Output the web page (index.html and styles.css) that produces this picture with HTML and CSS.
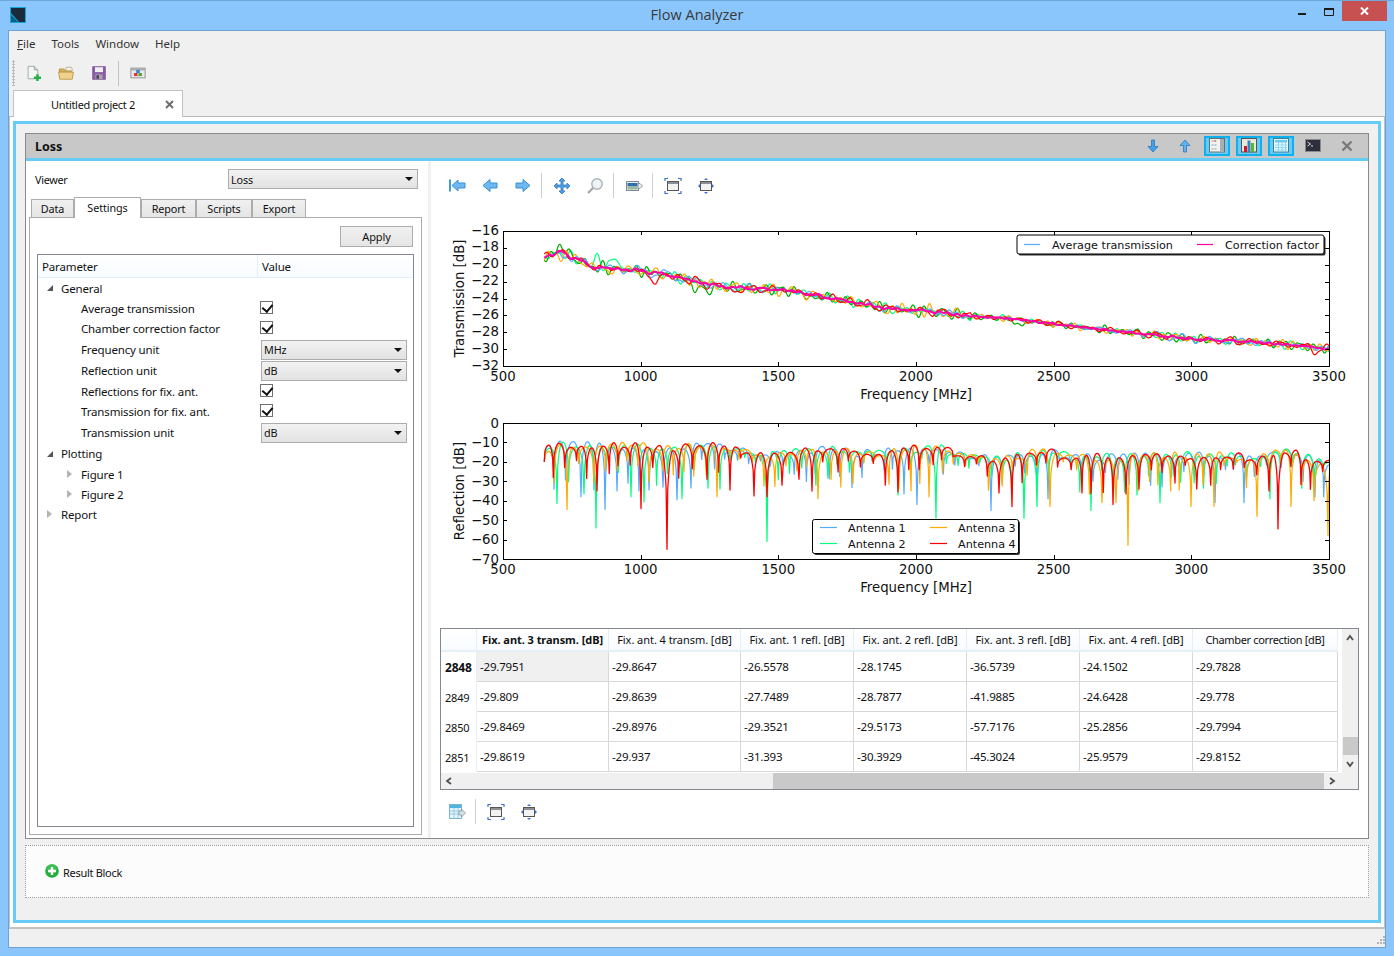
FILE: index.html
```html
<!DOCTYPE html>
<html lang="en">
<head>
<meta charset="utf-8">
<title>Flow Analyzer</title>
<link rel="stylesheet" href="styles.css">
</head>
<body>
<div class="window">
  <header class="titlebar">
    <svg class="appicon" viewBox="0 0 16 16"><rect width="16" height="16" fill="#14a5d8"/><path d="M1 1h14v14H9L1 6z" fill="#1b2a38"/><path d="M1 8l7 7H1z" fill="#0b5f86"/></svg>
    <div class="apptitle">Flow Analyzer</div>
    <div class="wincontrols">
      <svg class="wc-min" viewBox="0 0 8 2"><rect width="8" height="2" fill="#1a1a1a"/></svg>
      <svg class="wc-max" viewBox="0 0 10 8"><path d="M.5.5h9v7h-9z" fill="none" stroke="#1a1a1a"/><path d="M0 0h10v2H0z" fill="#1a1a1a"/></svg>
      <div class="wc-close"><svg viewBox="0 0 9 8"><path d="M1 .5l7 7M8 .5l-7 7" stroke="#fff" stroke-width="2"/></svg></div>
    </div>
  </header>
  <div class="client">
    <nav class="menubar">
      <span class="menu"><u>F</u>ile</span><span class="menu">Tools</span><span class="menu">Window</span><span class="menu">Help</span>
    </nav>
    <div class="toolbar">
      <div class="grip"></div>
      <button class="tb"><svg viewBox="0 0 18 18"><path d="M3.500 1.500h7l4 4v10h-11z" fill="#f4f6f3" stroke="#98a2a0"/><path d="M10.500 1.500v4h4" fill="#cfd8d6" stroke="#98a2a0"/><path d="M10 13h2.600v-2.600h2.800V13H18v2.800h-2.600v2.200h-2.800v-2.200H10z" fill="#27b04a"/></svg></button>
      <button class="tb"><svg viewBox="0 0 18 18"><path d="M1.500 4.500h5l1.500 1.500h7v2h-13.500z" fill="#d9b25e" stroke="#b28f3e"/><path d="M9 2.500h6l1 2v2H9z" fill="#f3f1e4" stroke="#b9b08c"/><path d="M.7 8h16.600l-1.300 8H2z" fill="#f1d28c" stroke="#bb9544"/></svg></button>
      <button class="tb"><svg viewBox="0 0 18 18"><rect x="2" y="2" width="14" height="14" fill="#8d5ca8" stroke="#7a4c97"/><rect x="4.500" y="2.500" width="9" height="5.500" fill="#efeef2"/><rect x="5" y="10.500" width="8" height="5.500" fill="#a7a3ad"/><rect x="6" y="11.500" width="3" height="4" fill="#4e4a55"/></svg></button>
      <i class="tbsep"></i>
      <button class="tb"><svg viewBox="0 0 18 18"><rect x="1" y="3.500" width="16" height="11" fill="#e8e8e8" stroke="#8c8c8c"/><rect x="1.500" y="4" width="15" height="2" fill="#a9a9a9"/><rect x="7" y="5.500" width="4" height="3.500" fill="#3585d0"/><rect x="4.500" y="9" width="4" height="3.500" fill="#d93a3a"/><rect x="9.500" y="9" width="4" height="3.500" fill="#55a83a"/></svg></button>
    </div>
    <div class="doctabs">
      <div class="doctab"><span class="doctab-label">Untitled project 2</span>
        <svg class="doctab-x" viewBox="0 0 9 9"><path d="M1 1l7 7M8 1L1 8" stroke="#6e6e6e" stroke-width="2"/></svg></div>
    </div>
    <main class="docpage">
      <div class="cyanframe">
        <section class="panel">
          <div class="panelhead">
            <span class="paneltitle">Loss</span>
            <div class="panelicons">
              <button class="pi"><svg viewBox="0 0 16 16"><path d="M6.500 2h3v6.500H13L8 14 3 8.500h3.500z" fill="#3fa2ea" stroke="#2a78bb" stroke-width=".8"/></svg></button>
              <button class="pi"><svg viewBox="0 0 16 16"><path d="M8 2l5 5.500H9.500V14h-3V7.500H3z" fill="#5fb4ef" stroke="#2a78bb" stroke-width=".8"/></svg></button>
              <button class="pi on"><svg viewBox="0 0 16 16"><rect x=".5" y=".5" width="15" height="13.500" fill="#f3f3ef" stroke="#6b6f73"/><rect x="11" y="1" width="4" height="12.500" fill="#a9aeb2"/><path d="M2.500 3h6" stroke="#999" stroke-dasharray="2 1"/><path d="M2.500 7h6" stroke="#6a9de0" stroke-dasharray="2 1"/><path d="M2.500 11h6" stroke="#999" stroke-dasharray="2 1"/><path d="M5 3h2" stroke="#d05a5a"/></svg></button>
              <button class="pi on"><svg viewBox="0 0 16 16"><rect x=".5" y=".5" width="15" height="13.500" fill="#ece9d8" stroke="#555"/><rect x="3" y="8" width="3" height="6" fill="#d8132c"/><rect x="6.500" y="2.500" width="3" height="11.500" fill="#2e87c7"/><rect x="10" y="5" width="3" height="9" fill="#5cb532"/></svg></button>
              <button class="pi on"><svg viewBox="0 0 16 16"><rect x=".5" y=".5" width="15" height="13.500" fill="#eefaff" stroke="#3d7f9b"/><rect x="2" y="2" width="12" height="2.500" fill="#62cdf0"/><path d="M2 7h12M2 9.500h12M2 12h12M5.500 4v9M9 4v9M12.500 4v9" stroke="#87d8f2"/></svg></button>
              <button class="pi"><svg viewBox="0 0 16 16"><rect x=".5" y="1.500" width="15" height="12" fill="#2d2f3d" stroke="#8a8a8a"/><path d="M2.500 4l3 2-3 2M6 8h2" stroke="#ddd" fill="none"/></svg></button>
              <button class="pi"><svg viewBox="0 0 16 16"><path d="M3.500 3.500l9 9M12.500 3.500l-9 9" stroke="#7a7a7a" stroke-width="2.400"/></svg></button>
            </div>
          </div>
          <div class="panelbody">
            <aside class="leftpane">
              <div class="viewerrow">
                <label class="viewerlabel">Viewer</label>
                <div class="combo viewercombo"><span>Loss</span><i class="arrow"></i></div>
              </div>
              <div class="settabs">
                <span class="settab st-data">Data</span><span class="settab active st-set">Settings</span><span class="settab st-rep">Report</span><span class="settab st-scr">Scripts</span><span class="settab st-exp">Export</span>
              </div>
              <div class="setpane">
                <div class="applyrow"><button class="apply">Apply</button></div>
                <div class="tree">
                  <div class="treehead"><span class="th-param">Parameter</span><span class="th-value">Value</span></div>
                  <div class="tr h21"><i class="tw open l0"></i><span class="tl">General</span></div>
                  <div class="tr h20"><span class="tl l1">Average transmission</span><span class="tv"><i class="check"></i></span></div>
                  <div class="tr h20"><span class="tl l1">Chamber correction factor</span><span class="tv"><i class="check"></i></span></div>
                  <div class="tr h22"><span class="tl l1">Frequency unit</span><span class="tv"><div class="combo valcombo"><span>MHz</span><i class="arrow"></i></div></span></div>
                  <div class="tr h21"><span class="tl l1">Reflection unit</span><span class="tv"><div class="combo valcombo"><span>dB</span><i class="arrow"></i></div></span></div>
                  <div class="tr h21"><span class="tl l1">Reflections for fix. ant.</span><span class="tv"><i class="check"></i></span></div>
                  <div class="tr h20"><span class="tl l1">Transmission for fix. ant.</span><span class="tv"><i class="check"></i></span></div>
                  <div class="tr h22"><span class="tl l1">Transmission unit</span><span class="tv"><div class="combo valcombo"><span>dB</span><i class="arrow"></i></div></span></div>
                  <div class="tr h21"><i class="tw open l0"></i><span class="tl">Plotting</span></div>
                  <div class="tr h20"><i class="tw l1w"></i><span class="tl l1">Figure 1</span></div>
                  <div class="tr h20"><i class="tw l1w"></i><span class="tl l1">Figure 2</span></div>
                  <div class="tr h20"><i class="tw l0"></i><span class="tl">Report</span></div>
                </div>
              </div>
            </aside>
            <div class="splitter"></div>
            <div class="rightpane">
              <div class="plottools">
                <button class="pt"><svg viewBox="0 0 18 18"><path d="M2 2.500v12" stroke="#3a9be0" stroke-width="2"/><path d="M4 8.500l6-5.500v3h7v5h-7v3z" fill="#6db8f0" stroke="#3a8fd0"/></svg></button>
                <button class="pt"><svg viewBox="0 0 18 18"><path d="M2 8.500l7-6v3.500h7v5H9v3.500z" fill="#6db8f0" stroke="#3a8fd0"/></svg></button>
                <button class="pt"><svg viewBox="0 0 18 18"><path d="M16 8.500l-7-6v3.500H2v5h7v3.500z" fill="#6db8f0" stroke="#3a8fd0"/></svg></button>
                <i class="ptsep"></i>
                <button class="pt"><svg viewBox="0 0 18 18"><path d="M9 1l3 3h-2v4h4V6l3 3-3 3v-2h-4v4h2l-3 3-3-3h2v-4H4v2L1 9l3-3v2h4V4H6z" fill="#4f9fe4" stroke="#2f79bd" stroke-width=".8"/></svg></button>
                <button class="pt"><svg viewBox="0 0 18 18"><circle cx="11" cy="7" r="5.200" fill="#eef3f6" stroke="#a9b2b6" stroke-width="1.400"/><path d="M7 11l-5 5" stroke="#a5a5a5" stroke-width="2.200"/></svg></button>
                <i class="ptsep"></i>
                <button class="pt"><svg viewBox="0 0 18 18"><rect x="1.500" y="4.500" width="12" height="9" fill="#e9eef0" stroke="#7c8c94"/><rect x="2.500" y="6" width="10" height="3" fill="#2d6fb0"/><path d="M2.500 9h10v3.500h-10z" fill="#9bb8a3"/><path d="M13 6.500h2L17.500 9 15 11.500h-2z" fill="#e8eef0" stroke="#8a979c"/></svg></button>
                <i class="ptsep"></i>
                <button class="pt"><svg viewBox="0 0 18 18"><rect x="3.500" y="4.500" width="11" height="9" fill="#f2f2f2" stroke="#555"/><rect x="4" y="5" width="10" height="2" fill="#8a8f98"/><path d="M1 4V1.500h3M14 1.500h3V4M17 14v2.500h-3M4 16.500H1V14" fill="none" stroke="#3d6fd6" stroke-width="1.200"/></svg></button>
                <button class="pt"><svg viewBox="0 0 18 18"><rect x="3.500" y="4.500" width="11" height="9" fill="#f2f2f2" stroke="#555"/><rect x="4" y="5" width="10" height="2" fill="#8a8f98"/><path d="M1 9l2-2v4zM17 9l-2-2v4zM9 1l2 2H7zM9 17l2-2H7z" fill="#3d6fd6"/></svg></button>
              </div>
              <div class="plots" id="plots"></div>
              <div class="datatable">
                <div class="dt-inner">
                  <div class="dt-main">
                    <table class="grid">
                      <colgroup><col class="c0"><col class="c1"><col class="c2"><col class="c3"><col class="c4"><col class="c5"><col class="c6"><col class="c7"></colgroup>
                      <thead><tr><th class="corner"></th><th class="sel">Fix. ant. 3 transm. [dB]</th><th>Fix. ant. 4 transm. [dB]</th><th>Fix. ant. 1 refl. [dB]</th><th>Fix. ant. 2 refl. [dB]</th><th>Fix. ant. 3 refl. [dB]</th><th>Fix. ant. 4 refl. [dB]</th><th class="tight">Chamber correction [dB]</th></tr></thead>
                      <tbody>
                        <tr><th class="rh cur">2848</th><td class="curcell">-29.7951</td><td>-29.8647</td><td>-26.5578</td><td>-28.1745</td><td>-36.5739</td><td>-24.1502</td><td>-29.7828</td></tr>
                        <tr><th class="rh">2849</th><td>-29.809</td><td>-29.8639</td><td>-27.7489</td><td>-28.7877</td><td>-41.9885</td><td>-24.6428</td><td>-29.778</td></tr>
                        <tr><th class="rh">2850</th><td>-29.8469</td><td>-29.8976</td><td>-29.3521</td><td>-29.5173</td><td>-57.7176</td><td>-25.2856</td><td>-29.7994</td></tr>
                        <tr><th class="rh">2851</th><td>-29.8619</td><td>-29.937</td><td>-31.393</td><td>-30.3929</td><td>-45.3024</td><td>-25.9579</td><td>-29.8152</td></tr>
                      </tbody>
                    </table>
                    <div class="hscroll">
                      <svg class="sarrow" viewBox="0 0 8 8"><path d="M6 1L2 4l4 3" fill="none" stroke="#505050" stroke-width="1.800"/></svg>
                      <div class="htrack"><div class="hthumb"></div></div>
                      <svg class="sarrow" viewBox="0 0 8 8"><path d="M2 1l4 3-4 3" fill="none" stroke="#505050" stroke-width="1.800"/></svg>
                    </div>
                  </div>
                  <div class="vscroll">
                    <svg class="sarrow" viewBox="0 0 8 8"><path d="M1 6l3-4 3 4" fill="none" stroke="#505050" stroke-width="1.800"/></svg>
                    <div class="vtrack"><div class="vthumb"></div></div>
                    <svg class="sarrow" viewBox="0 0 8 8"><path d="M1 2l3 4 3-4" fill="none" stroke="#505050" stroke-width="1.800"/></svg>
                  </div>
                </div>
              </div>
              <div class="tabletools">
                <button class="pt"><svg viewBox="0 0 18 18"><rect x="1.500" y="1.500" width="12" height="14" fill="#e6f4fb" stroke="#7fb3cc"/><rect x="2" y="2" width="11" height="3" fill="#4eb4e0"/><path d="M2 8h11M2 11h11M6 5v10M10 5v10" stroke="#96cde6"/><path d="M11 8h2.500v-2l4 4-4 4v-2H11z" fill="#d6dfe3" stroke="#8b9aa1" stroke-width=".8"/></svg></button>
                <i class="ptsep"></i>
                <button class="pt"><svg viewBox="0 0 18 18"><rect x="3.500" y="4.500" width="11" height="9" fill="#f2f2f2" stroke="#555"/><rect x="4" y="5" width="10" height="2" fill="#8a8f98"/><path d="M1 4V1.500h3M14 1.500h3V4M17 14v2.500h-3M4 16.500H1V14" fill="none" stroke="#3d6fd6" stroke-width="1.200"/></svg></button>
                <button class="pt"><svg viewBox="0 0 18 18"><rect x="3.500" y="4.500" width="11" height="9" fill="#f2f2f2" stroke="#555"/><rect x="4" y="5" width="10" height="2" fill="#8a8f98"/><path d="M1 9l2-2v4zM17 9l-2-2v4zM9 1l2 2H7zM9 17l2-2H7z" fill="#3d6fd6"/></svg></button>
              </div>
            </div>
          </div>
        </section>
        <section class="resultblock">
          <svg class="addicon" viewBox="0 0 14 14"><circle cx="7" cy="7" r="6.800" fill="#1fae3b"/><circle cx="7" cy="5" r="5" fill="#4dc964" opacity=".6"/><path d="M7 3v8M3 7h8" stroke="#fff" stroke-width="2.400"/></svg>
          <span class="addlabel">Result Block</span>
        </section>
      </div>
    </main>
    <footer class="statusbar">
      <svg class="sizegrip" viewBox="0 0 9 9"><path d="M7 0h2v2H7zM4 3h2v2H4zM7 3h2v2H7zM1 6h2v2H1zM4 6h2v2H4zM7 6h2v2H7z" fill="#b5b5b5"/></svg>
    </footer>
  </div>
</div>
<script src="plots.js"></script>
</body>
</html>
```

FILE: styles.css
```css
* { box-sizing: border-box; }
html, body { margin: 0; padding: 0; }
body {
  width: 1394px; height: 956px; overflow: hidden;
  font-family: "Noto Sans", "Open Sans", sans-serif; font-size: 11.5px; color: #111;
  background: #8ac6fb;
}
button { font: inherit; color: inherit; padding: 0; margin: 0; border: 0; background: none; }
svg { display: block; }

.window { display: flex; flex-direction: column; width: 1394px; height: 956px; padding: 0 8px 8px; border-top: 1px solid #6fa8d8; }
.titlebar { height: 29px; flex: none; display: flex; align-items: flex-start; position: relative; margin: 0 -8px; padding-left: 10px; }
.appicon { width: 16px; height: 16px; margin-top: 6px; }
.apptitle { position: absolute; left: 0; right: 0; top: 5px; text-align: center; font-family: "Open Sans", "Noto Sans", sans-serif; font-size: 14.500px; color: #3a3a3a; line-height: 18px; }
.wincontrols { margin-left: auto; margin-right: 7px; display: flex; align-items: flex-start; position: relative; }
.wc-min { width: 8px; height: 2px; margin: 12px 18px 0 0; }
.wc-max { width: 10px; height: 8px; margin: 7px 8px 0 0; }
.wc-close { width: 45px; height: 20px; background: #c75050; display: flex; align-items: center; justify-content: center; }
.wc-close svg { width: 9px; height: 8px; }

.client { flex: 1; min-height: 0; display: flex; flex-direction: column; background: #f0f0f0; border: 1px solid #6fa3d6; }
.menubar { height: 26px; flex: none; display: flex; align-items: center; padding: 0 0 2px 8px; gap: 16px; }
.menu { color: #333; font-size: 11.500px; }
.toolbar { height: 32px; flex: none; display: flex; align-items: center; padding-left: 3px; }
.grip { width: 3px; height: 26px; background-image: radial-gradient(circle, #bdbdbd 1px, transparent 1.200px); background-size: 3px 3px; margin-right: 1px; }
.tb { width: 33px; height: 24px; display: flex; align-items: center; justify-content: center; }
.tb svg { width: 16px; height: 16px; }
.tbsep { width: 1px; height: 25px; background: #c4c4c4; margin: 0 2px 0 3px; }
.doctabs { height: 28px; flex: none; display: flex; align-items: flex-end; padding-left: 4px; border-bottom: 1px solid #b9b9b9; }
.doctab { width: 170px; height: 27px; margin-bottom: -1px; background: #fff; border: 1px solid #c2c2c2; border-bottom: 0; display: flex; align-items: center; position: relative; padding-left: 37px; color: #111; }
.doctab-label { font-size: 11px; letter-spacing: -.3px; }
.doctab-x { position: absolute; right: 8px; top: 9px; width: 9px; height: 9px; }
.docpage { flex: 1; min-height: 0; background: #fff; padding: 4px 3px; border: solid #c2c2c2; border-width: 0 1px 2px; }
.cyanframe { height: 100%; border: 3px solid #66ccf5; background: #f0f0f0; padding: 9px 9px 0; display: flex; flex-direction: column; gap: 6px; }

.panel { height: 706px; flex: none; background: #fff; border: 1px solid #8a8a8a; display: flex; flex-direction: column; }
.panelhead { height: 27px; flex: none; background: #c8c8c8; border-bottom: 3px solid #66ccf5; display: flex; align-items: center; padding-left: 9px; }
.paneltitle { font-weight: 700; font-size: 12.500px; color: #111; }
.panelicons { margin-left: auto; display: flex; align-items: center; gap: 6px; padding-right: 8px; }
.pi { width: 26px; height: 20px; display: flex; align-items: center; justify-content: center; border: 2px solid transparent; }
.pi:last-child { margin-left: 2px; }
.pi.on { background: #66ccf5; border-color: #0fb0ef; }
.pi svg { width: 16px; height: 16px; }
.panelbody { flex: 1; min-height: 0; display: flex; }
.leftpane { width: 402px; flex: none; padding: 8px 6px 3px 3px; display: flex; flex-direction: column; }
.splitter { width: 3px; background: #f0f0f0; flex: none; }
.rightpane { flex: 1; min-width: 0; display: flex; flex-direction: column; padding: 11px 9px 0; }

.viewerrow { height: 20px; flex: none; display: flex; align-items: center; padding-left: 6px; }
.viewerlabel { width: 193px; font-size: 10.800px; letter-spacing: -.3px; }
.combo { background: linear-gradient(#f2f2f2, #e2e2e2); border: 1px solid #adadad; display: flex; align-items: center; padding-left: 2px; position: relative; font-size: 10.800px; letter-spacing: -.1px; }
.viewercombo { width: 190px; height: 20px; }
.arrow { position: absolute; right: 4px; top: 50%; margin-top: -2px; border: 4px solid transparent; border-top-color: #111; border-bottom: 0; width: 0; height: 0; }
.settabs { height: 20px; margin-top: 8px; flex: none; display: flex; align-items: flex-end; padding-left: 2px; position: relative; z-index: 1; }
.settab { height: 18px; border: 1px solid #acacac; border-bottom: 0; background: linear-gradient(#f0f0f0, #e5e5e5); display: flex; align-items: center; justify-content: center; font-size: 10.800px; letter-spacing: -.1px; }
.settab.active { height: 21px; margin-bottom: -1px; background: #fff; padding-bottom: 2px; }
.st-data { width: 43px; } .st-set { width: 67px; } .st-rep { width: 55px; } .st-scr { width: 56px; } .st-exp { width: 54px; }
.setpane { flex: 1; min-height: 0; border: 1px solid #acacac; padding: 8px 7px 7px; display: flex; flex-direction: column; }
.applyrow { height: 21px; flex: none; display: flex; justify-content: flex-end; padding-right: 1px; }
.apply { width: 73px; height: 21px; border: 1px solid #adadad; background: linear-gradient(#f0f0f0, #e5e5e5); font-size: 11px; letter-spacing: -.15px; }
.tree { flex: 1; min-height: 0; margin-top: 7px; border: 1px solid #828790; background: #fff; letter-spacing: -.15px; }
.treehead { height: 23px; display: flex; align-items: center; background: linear-gradient(#fff, #f7fbff); border-bottom: 1px solid #e4eff8; font-size: 11.500px; }
.th-param { width: 220px; padding-left: 4px; border-right: 1px solid #e4eff8; height: 100%; display: flex; align-items: center; }
.th-value { padding-left: 4px; }
.tr { display: flex; align-items: center; position: relative; font-size: 11.500px; white-space: nowrap; }
.h20 { height: 20px; } .h21 { height: 20.500px; } .h22 { height: 22px; }
.tl { margin-left: 23px; }
.tl.l1 { margin-left: 43px; width: 180px; flex: none; }
.tv { display: flex; align-items: center; margin-left: -1px; }
.tw { position: absolute; width: 0; height: 0; border-left: 5px solid #a0a0a0; border-top: 4px solid transparent; border-bottom: 4px solid transparent; opacity: .8; }
.tw.l0 { left: 9px; } .tw.l1w { left: 29px; }
.tw.open { border: 0; border-right: 6px solid #555; border-top: 6px solid transparent; opacity: 1; }
.check { width: 13px; height: 13px; margin-top: -2px; border: 1px solid #707070; display: block; background: #fff; position: relative; }
.check::after { content: ""; position: absolute; left: 3px; top: 0; width: 5px; height: 8px; border: solid #111; border-width: 0 2px 2px 0; transform: rotate(40deg); }
.valcombo { width: 146px; height: 20px; margin-left: 1px; }

.plottools, .tabletools { display: flex; align-items: center; flex: none; height: 25px; padding-left: 1px; }
.plottools { padding-top: 2px; }
.pt { width: 33px; height: 24px; display: flex; align-items: center; justify-content: flex-start; padding-left: 7px; }
.pt svg { width: 18px; height: 18px; }
.ptsep { width: 1px; height: 25px; background: #cfcfcf; margin: 0 4px 0 1px; flex: none; display: block; }
.plots { height: 431px; flex: none; }
.plots svg { width: 937px; height: 431px; margin-left: -9px; }
.plots text { font-family: "DejaVu Sans", sans-serif; fill: #111; }

.datatable { height: 162px; width: 919px; flex: none; border: 1px solid #828790; background: #f0f0f0; }
.dt-inner { display: flex; height: 100%; }
.dt-main { width: 901px; flex: none; display: flex; flex-direction: column; background: #fff; }
.grid { border-collapse: separate; border-spacing: 0; table-layout: fixed; width: 896px; background: #fff; }
.c0 { width: 36px; } .c1, .c2 { width: 132px; } .c3, .c4, .c5, .c6 { width: 113px; } .c7 { width: 145px; }
.grid th, .grid td { padding: 0; font-weight: 400; white-space: nowrap; overflow: hidden; font-size: 11.500px; letter-spacing: -.2px; }
.grid thead th { height: 23px; text-align: center; background: linear-gradient(#fff, #f8fbff); border-right: 1px solid #e4eff8; border-bottom: 2px solid #e4eff8; font-size: 11px; letter-spacing: -.05px; }
.grid thead th.sel { font-weight: 700; }
.grid thead th.tight { letter-spacing: -.35px; }
.grid td { height: 30px; padding-left: 3px; border-right: 1px solid #d8d8d8; border-bottom: 1px solid #d8d8d8; }
.grid .rh { text-align: left; padding: 2px 0 0 4px; background: #fff; border-right: 1px solid #e4eff8; border-bottom: 1px solid #fff; font-size: 11px; }
.grid .rh.cur { font-weight: 700; font-size: 12px; }
.grid td.curcell { background: #f0f0f0; }
.hscroll { height: 16px; margin-top: 1px; padding-right: 4px; display: flex; align-items: center; background: #f0f0f0; }
.sarrow { width: 8px; height: 8px; flex: none; margin: 0 4px; }
.htrack { flex: 1; height: 16px; }
.hthumb { margin-left: 316px; width: 551px; height: 100%; background: #c9c9c9; }
.vscroll { flex: 1; display: flex; flex-direction: column; align-items: center; padding-top: 5px; }
.vscroll .sarrow { margin: 0; }
.vtrack { height: 118px; width: 15px; padding-top: 95px; }
.vthumb { height: 18px; background: #c9c9c9; }
.tabletools { margin-top: 9px; }

.resultblock { height: 53px; flex: none; background: #fcfcfc; border: 1px dotted #9c9c9c; display: flex; align-items: center; padding-left: 19px; }
.addicon { width: 14px; height: 14px; margin-right: 4px; margin-top: -1px; }
.addlabel { font-size: 11px; letter-spacing: -.3px; margin-top: 1px; }
.statusbar { height: 18px; flex: none; position: relative; }
.sizegrip { position: absolute; right: 0; bottom: 2px; width: 9px; height: 9px; }
```

FILE: plots.js
```js
(function () {
  var NS = 'http://www.w3.org/2000/svg';
  var OX = 431, OY = 197;
  var host = document.getElementById('plots');
  var svg = document.createElementNS(NS, 'svg');
  svg.setAttribute('viewBox', '0 0 937 431');
  host.appendChild(svg);

  function el(name, attrs, parent, txt) {
    var e = document.createElementNS(NS, name);
    for (var k in attrs) e.setAttribute(k, attrs[k]);
    if (txt !== undefined) e.textContent = txt;
    (parent || svg).appendChild(e);
    return e;
  }
  function rng(seed) {
    var s = seed;
    return function () { s = (s * 16807) % 2147483647; return (s - 1) / 2147483646; };
  }
  function interp(tbl, x) {
    for (var i = 1; i < tbl.length; i++) {
      if (x <= tbl[i][0]) {
        var t = (x - tbl[i - 1][0]) / (tbl[i][0] - tbl[i - 1][0]);
        return tbl[i - 1][1] + t * (tbl[i][1] - tbl[i - 1][1]);
      }
    }
    return tbl[tbl.length - 1][1];
  }
  var L = 503 - OX, R = 1329 - OX;
  function X(f) { return L + (f - 500) / 3000 * (R - L); }
  function F(px) { return 500 + (px - 503) / 826 * 3000; }

  function axes(top, bottom, ymin, ymax, step, ylabel, clipId, labelDy) {
    var Y = function (v) { return top + (ymax - v) / (ymax - ymin) * (bottom - top); };
    var defs = el('defs', {});
    var c = el('clipPath', { id: clipId }, defs);
    el('rect', { x: L, y: top, width: R - L, height: bottom - top }, c);
    var g = el('g', { 'clip-path': 'url(#' + clipId + ')' });
    return { Y: Y, g: g, top: top, bottom: bottom, ymin: ymin, ymax: ymax, step: step, ylabel: ylabel, dy: labelDy };
  }
  function frame(a) {
    el('rect', { x: L + .5, y: a.top + .5, width: R - L, height: a.bottom - a.top, fill: 'none', stroke: '#000', 'stroke-width': 1 });
    var v, px;
    for (v = a.ymin; v <= a.ymax; v += a.step) {
      px = Math.round(a.Y(v)) + .5;
      el('path', { d: 'M' + L + ' ' + px + 'h4M' + R + ' ' + px + 'h-4', stroke: '#000', 'stroke-width': 1, fill: 'none' });
      el('text', { x: L - 4, y: a.Y(v) + a.dy, 'text-anchor': 'end', 'font-size': 13.3 }, svg, String(v).replace('-', '\u2212'));
    }
    for (v = 500; v <= 3500; v += 500) {
      px = Math.round(X(v)) + .5;
      el('path', { d: 'M' + px + ' ' + a.top + 'v4M' + px + ' ' + a.bottom + 'v-4', stroke: '#000', 'stroke-width': 1, fill: 'none' });
      el('text', { x: X(v), y: a.bottom + 14.5, 'text-anchor': 'middle', 'font-size': 13.3 }, svg, String(v));
    }
    el('text', { x: (L + R) / 2, y: a.bottom + 33, 'text-anchor': 'middle', 'font-size': 13.3 }, svg, 'Frequency [MHz]');
    var my = (a.top + a.bottom) / 2;
    el('text', { x: 33, y: my, 'text-anchor': 'middle', 'font-size': 13.3, transform: 'rotate(-90 33 ' + my + ')' }, svg, a.ylabel);
  }
  function poly(parent, pts, color, w) {
    el('polyline', { points: pts.join(' '), fill: 'none', stroke: color, 'stroke-width': w, 'stroke-linejoin': 'round' }, parent);
  }
  function legend(x, y, w, h, items) {
    el('rect', { x: x + 1.5, y: y + 1.5, width: w, height: h, rx: 2, fill: '#333' });
    el('rect', { x: x, y: y, width: w, height: h, rx: 2, fill: '#fff', stroke: '#000', 'stroke-width': 1 });
    items.forEach(function (it) {
      el('path', { d: 'M' + it.x + ' ' + it.y + 'h' + it.len, stroke: it.c, 'stroke-width': 1.2, fill: 'none' });
      el('text', { x: it.tx, y: it.y + 4, 'font-size': 11.2 }, svg, it.t);
    });
  }

  /* ---------- transmission plot ---------- */
  var t = axes(231 - OY, 366 - OY, -32, -16, 2, 'Transmission [dB]', 'clipT', 3.5);
  var trend = [[650, -19], [700, -18.8], [760, -19.2], [830, -20.3], [1000, -20.7], [1100, -21.2], [1200, -22], [1300, -22.6], [1400, -22.8], [1530, -23], [1700, -24], [1900, -25.2], [2050, -25.5], [2200, -26.1], [2350, -26.4], [2600, -27.4], [2800, -28.1], [3000, -28.8], [3200, -29.1], [3400, -29.6], [3500, -30]];
  function transCurve(seed, amp, bumps) {
    var r = rng(seed), waves = [];
    for (var i = 0; i < 7; i++) waves.push([5 + r() * 12, r() * 6.28, .3 + r() * .7]);
    var pts = [];
    for (var f = 650; f <= 3500; f += 3) {
      var n = 0;
      for (var j = 0; j < waves.length; j++) n += waves[j][2] * Math.sin(f / waves[j][0] + waves[j][1]);
      var a = amp * (f < 2200 ? 1 : f < 2850 ? .6 : .8);
      var b = 0;
      (bumps || []).forEach(function (k) { b += k[1] * Math.exp(-Math.pow((f - k[0]) / k[2], 2)); });
      pts.push(X(f).toFixed(1) + ',' + t.Y(interp(trend, f) + n * a + b).toFixed(1));
    }
    return pts;
  }
  poly(t.g, transCurve(11, .24, [[845, 1, 18], [903, 1.1, 24], [715, .3, 20]]), '#00ff7f', 1.2);
  poly(t.g, transCurve(29, .26, [[715, 1.2, 20], [1205, -1, 20], [1248, -.9, 18], [1620, -.6, 20], [2378, -.8, 18]]), '#00aa00', 1.2);
  poly(t.g, transCurve(47, .24, [[885, -.4, 15]]), '#ffaa00', 1.2);
  poly(t.g, transCurve(83, .18), '#55aaff', 1.2);
  poly(t.g, transCurve(101, .24, [[715, .6, 18], [1050, -.9, 30], [1350, -.5, 24], [3442, -.5, 14]]), '#ff0000', 1.2);
  poly(t.g, transCurve(137, .09, [[715, .5, 18]]), '#ff00aa', 2);
  frame(t);
  legend(1017 - OX, 235 - OY, 307, 19, [
    { x: 1024 - OX, y: 244.5 - OY, len: 16, tx: 1052 - OX, c: '#55aaff', t: 'Average transmission' },
    { x: 1197 - OX, y: 244.5 - OY, len: 16, tx: 1225 - OX, c: '#ff00aa', t: 'Correction factor' }
  ]);

  /* ---------- reflection plot ---------- */
  var p = axes(423 - OY, 559 - OY, -70, 0, 10, 'Reflection [dB]', 'clipR', 4.5);
  var env = [[650, -14], [700, -10.5], [1000, -11.5], [1100, -13], [1250, -10], [1400, -15], [1500, -16], [1600, -13], [1700, -13.5], [1800, -15], [1950, -14], [2050, -11.5], [2200, -16], [2300, -18], [2450, -14], [2600, -17], [2800, -17], [3000, -16], [3200, -17], [3350, -14], [3500, -20]];
  var shallow = [[1300, 1480], [1797, 1880], [2100, 2258], [2512, 2585], [3115, 3177]];
  function isShallow(f) { return shallow.some(function (z) { return f >= z[0] && f <= z[1]; }); }
  function reflCurve(seed, period, deep) {
    var r = rng(seed);
    var forced = [[650, -20]].concat(deep.map(function (d) { return [F(d[0]), d[1]]; })).concat([[3520, -25]]);
    forced.sort(function (a, b) { return a[0] - b[0]; });
    var nulls = [];
    for (var k = 0; k < forced.length - 1; k++) {
      var a = forced[k], b = forced[k + 1];
      nulls.push(a);
      var cnt = Math.max(1, Math.round((b[0] - a[0]) / period));
      for (var m = 1; m < cnt; m++) {
        var ff = a[0] + (b[0] - a[0]) * (m + (r() - .5) * .3) / cnt;
        var top = interp(env, ff);
        var d = isShallow(ff) ? top - 3 - r() * 5 : top - 5 - r() * 15;
        nulls.push([ff, d]);
      }
    }
    nulls.push(forced[forced.length - 1]);
    var pts = [];
    for (var i = 0; i < nulls.length - 1; i++) {
      var na = nulls[i], nb = nulls[i + 1];
      var peak = interp(env, (na[0] + nb[0]) / 2) + (r() - .6) * 4;
      var steps = 16;
      for (var s = 0; s <= steps; s++) {
        var u = s / steps;
        var lim = u < .5 ? na[1] : nb[1];
        var v = lim + (peak - lim) * Math.pow(Math.sin(Math.PI * u), .32);
        var fr = na[0] + (nb[0] - na[0]) * u;
        pts.push(X(fr).toFixed(1) + ',' + p.Y(v).toFixed(1));
      }
    }
    return pts;
  }
  poly(p.g, reflCurve(7, 42, [[554, -34], [581, -38], [594, -34.5], [605, -44.5], [617, -35], [628, -31], [639, -35], [649, -34.5], [663, -33], [677, -39.5], [691, -33.5], [862, -28], [904, -36.5], [917, -42], [991, -45], [1048, -39], [1162, -33], [1215, -41], [1244, -41], [1315, -38]]), '#55aaff', 1.2);
  poly(p.g, reflCurve(53, 42, [[557, -41.5], [584, -36.5], [596, -54], [631, -38], [644, -40.5], [682, -39], [708, -33.5], [720, -34], [767, -61], [898, -37], [936, -49], [1024, -49], [1037, -43], [1091, -45], [1137, -37], [1160, -41], [1270, -39]]), '#00ff7f', 1.2);
  poly(p.g, reflCurve(71, 42, [[554, -31], [567, -44.5], [594, -31], [717, -38], [764, -32.5], [818, -39], [911, -35], [929, -38], [1050, -43], [1102, -41], [1116, -41], [1128, -63], [1138, -35], [1191, -43], [1214, -43], [1257, -48], [1291, -43], [1314, -40], [1328, -58]]), '#ffaa00', 1.2);
  poly(p.g, reflCurve(97, 42, [[597, -35], [641, -44], [667, -65], [707, -29], [730, -34.5], [754, -37.5], [767, -38], [782, -32], [799, -29], [812, -35], [898, -35.5], [999, -36], [1012, -43], [1082, -36], [1113, -42], [1126, -36.5], [1269, -35], [1278, -54.5]]), '#ff0000', 1.3);
  frame(p);
  legend(812.5 - OX, 519.5 - OY, 206, 34, [
    { x: 820 - OX, y: 527.5 - OY, len: 17, tx: 848 - OX, c: '#55aaff', t: 'Antenna 1' },
    { x: 820 - OX, y: 543.5 - OY, len: 17, tx: 848 - OX, c: '#00ff7f', t: 'Antenna 2' },
    { x: 930 - OX, y: 527.5 - OY, len: 17, tx: 958 - OX, c: '#ffaa00', t: 'Antenna 3' },
    { x: 930 - OX, y: 543.5 - OY, len: 17, tx: 958 - OX, c: '#ff0000', t: 'Antenna 4' }
  ]);
})();
```
